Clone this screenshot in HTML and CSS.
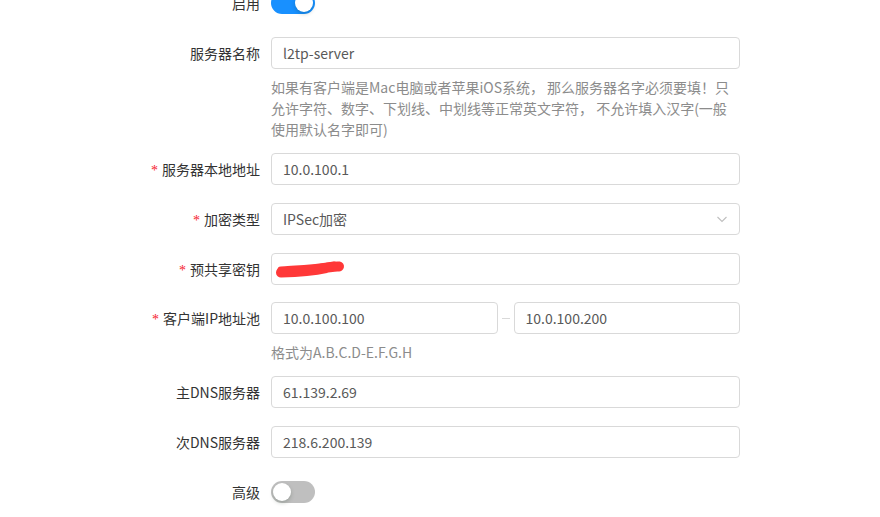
FILE: index.html
```html
<!DOCTYPE html>
<html>

<head>
  <meta charset="UTF-8">
  <title>L2TP 设置</title>
  <link rel="stylesheet" href="styles.css">
</head>

<body>
  <div class="form">

    <div class="item">
      <label class="label">启用</label>
      <div class="control">
        <span class="switch on"><span class="knob"></span></span>
      </div>
    </div>

    <div class="item has-help">
      <label class="label">服务器名称</label>
      <div class="control">
        <div class="input">l2tp-server</div>
        <div class="explain">如果有客户端是Mac电脑或者苹果iOS系统， 那么服务器名字必须要填！只允许字符、数字、下划线、中划线等正常英文字符， 不允许填入汉字(一般使用默认名字即可)</div>
      </div>
    </div>

    <div class="item">
      <label class="label"><span class="req">*</span>服务器本地地址</label>
      <div class="control">
        <div class="input">10.0.100.1</div>
      </div>
    </div>

    <div class="item">
      <label class="label"><span class="req">*</span>加密类型</label>
      <div class="control">
        <div class="input select">
          <span>IPSec加密</span>
          <svg class="arrow" width="12" height="12" viewBox="0 0 12 12">
            <path d="M1.5 4 L6 8.5 L10.5 4" fill="none" stroke="#bfbfbf" stroke-width="1.1"/>
          </svg>
        </div>
      </div>
    </div>

    <div class="item tight">
      <label class="label"><span class="req">*</span>预共享密钥</label>
      <div class="control">
        <div class="input secret">
          <svg width="74" height="24" viewBox="0 0 74 24">
            <path d="M9 15.5 C 24 15, 40 14, 54 11 C 60 10, 64 9, 67 9.5" fill="none" stroke="#ff3838" stroke-width="10" stroke-linecap="round"/>
            <path d="M9 13 C 22 12, 42 11.5, 62 8" fill="none" stroke="#ff3838" stroke-width="7" stroke-linecap="round"/>
          </svg>
        </div>
      </div>
    </div>

    <div class="item has-help">
      <label class="label"><span class="req">*</span>客户端IP地址池</label>
      <div class="control">
        <div class="range">
          <div class="input">10.0.100.100</div>
          <span class="sep"></span>
          <div class="input">10.0.100.200</div>
        </div>
        <div class="explain">格式为A.B.C.D-E.F.G.H</div>
      </div>
    </div>

    <div class="item">
      <label class="label">主DNS服务器</label>
      <div class="control">
        <div class="input">61.139.2.69</div>
      </div>
    </div>

    <div class="item">
      <label class="label">次DNS服务器</label>
      <div class="control">
        <div class="input">218.6.200.139</div>
      </div>
    </div>

    <div class="item">
      <label class="label">高级</label>
      <div class="control">
        <span class="switch"><span class="knob"></span></span>
      </div>
    </div>

  </div>
</body>

</html>
```

FILE: styles.css
```css
body,
html {
  padding: 0;
  margin: 0;
}

body {
  font-family: "Noto Sans CJK SC", sans-serif;
  font-size: 14px;
  background: #fff;
  overflow: hidden;
}

.form {
  width: 619px;
  margin: -13px 0 0 121px;
}

.item {
  display: flex;
  margin-bottom: 18px;
}

.item.tight {
  margin-bottom: 17px;
}

.item.has-help {
  margin-bottom: 13px;
}

.label {
  width: 150px;
  flex-shrink: 0;
  padding-right: 11px;
  box-sizing: border-box;
  text-align: right;
  line-height: 32px;
  height: 32px;
  color: #333;
  white-space: nowrap;
}

.req {
  color: #f5222d;
  font-family: "Liberation Serif", serif;
  margin-right: 4px;
}

.control {
  flex: 1;
  min-height: 32px;
  display: flex;
  flex-direction: column;
  justify-content: center;
}

.input {
  height: 32px;
  box-sizing: border-box;
  border: 1px solid #d9d9d9;
  border-radius: 4px;
  padding: 0 11px;
  line-height: 30px;
  color: #595959;
  display: flex;
  align-items: center;
}

.select {
  justify-content: space-between;
}

.secret {
  padding-left: 0;
}

.range {
  display: flex;
  align-items: center;
}

.range .input {
  flex: 1;
}

.sep {
  width: 8px;
  height: 1px;
  background: #d9d9d9;
  margin: 0 4px;
}

.explain {
  margin-top: 8px;
  line-height: 21px;
  color: #8c8c8c;
}

.switch {
  display: flex;
  width: 44px;
  height: 22px;
  border-radius: 11px;
  background: #bfbfbf;
  padding: 2px;
  box-sizing: border-box;
}

.switch.on {
  background: #1890ff;
  justify-content: flex-end;
}

.knob {
  width: 18px;
  height: 18px;
  border-radius: 50%;
  background: #fff;
  box-shadow: 0 2px 4px 0 rgba(0, 35, 11, 0.2);
}
```
